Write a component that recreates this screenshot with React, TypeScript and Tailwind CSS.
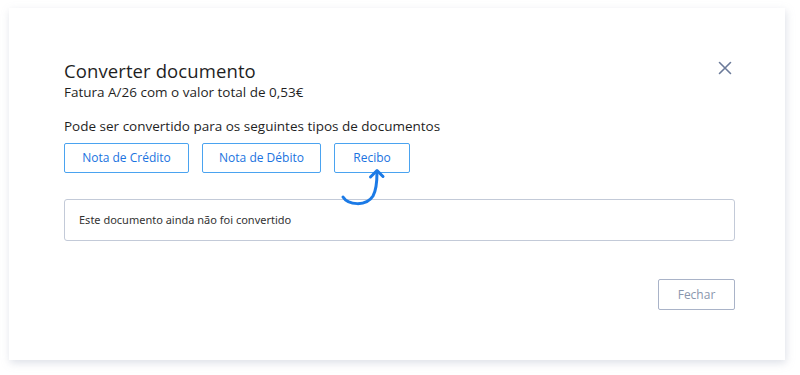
import React from "react";

export default function App() {
  return (
    <div className="w-[800px] h-[375px] bg-white pt-[8px] pl-[9px]" style={{ fontFamily: "'Open Sans', 'Noto Sans', sans-serif" }}>
      <div className="w-[776px] h-[352px] bg-white pl-[55px] pr-[50px] pt-[52px] shadow-[1px_3px_8px_rgba(160,170,190,0.35)]">
        <div className="flex justify-between items-start">
          <div>
            <h1 className="text-[18.5px] leading-[22px] text-[#1f1f1f] tracking-[0.1px]">Converter documento</h1>
            <p className="text-[13.5px] leading-[18px] mt-[1px] text-[#1f1f1f]">Fatura A/26 com o valor total de 0,53€</p>
          </div>
          <svg className="mt-[1px] mr-[3px]" width="14" height="14" viewBox="0 0 14 14" fill="none">
            <path d="M1.5 1.5L12.5 12.5M12.5 1.5L1.5 12.5" stroke="#6b7a99" strokeWidth="1.6" strokeLinecap="round" />
          </svg>
        </div>
        <p className="text-[13.5px] leading-[18px] mt-[16px] text-[#1f1f1f]">Pode ser convertido para os seguintes tipos de documentos</p>
        <div className="flex gap-[13px] mt-[8px] relative">
          <button className="h-[30px] w-[125px] border border-[#4aa3f0] rounded-[2px] text-[12px] text-[#1a73e0]">Nota de Crédito</button>
          <button className="h-[30px] w-[119px] border border-[#4aa3f0] rounded-[2px] text-[12px] text-[#1a73e0]">Nota de Débito</button>
          <button className="h-[30px] w-[76px] border border-[#4aa3f0] rounded-[2px] text-[12px] text-[#1a73e0]">Recibo</button>
          <svg className="absolute left-[274px] top-[22px] z-10" width="52" height="45" viewBox="0 0 52 45" fill="none">
            <path d="M5 32C10 40 28 42 35 31C39 24 39 14 39 7" stroke="#1b7ae6" strokeWidth="3" strokeLinecap="round" />
            <path d="M32.5 12L39 5.5L45 11.5" stroke="#1b7ae6" strokeWidth="3" strokeLinecap="round" strokeLinejoin="round" />
          </svg>
        </div>
        <div className="mt-[26px] h-[42px] border border-[#c3cad8] rounded-[3px] flex items-center pl-[14px] text-[11px] text-[#333]" style={{ fontFamily: "'Noto Sans', sans-serif" }}>
          Este documento ainda não foi convertido
        </div>
        <div className="flex justify-end mt-[38px]">
          <button className="h-[31px] w-[77px] border border-[#a9b3c8] rounded-[2px] text-[12px] text-[#8a96ad]">Fechar</button>
        </div>
      </div>
    </div>
  );
}
